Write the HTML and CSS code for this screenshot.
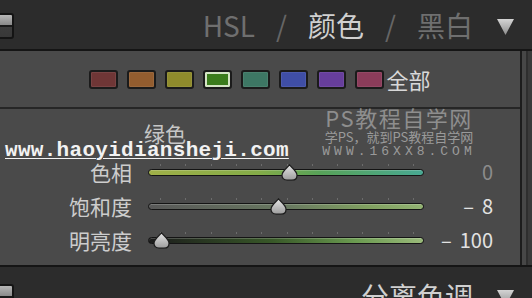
FILE: index.html
```html
<!DOCTYPE html>
<html lang="zh-CN">
<head>
    <meta charset="UTF-8">
    <meta name="viewport" content="width=device-width, initial-scale=1.0">
    <title>HSL / 颜色 / 黑白</title>
    <link rel="stylesheet" href="styles.css">
</head>
<body>
    <!-- Panel header -->
    <div class="bar">
        <span class="switch"></span>
        <div class="tabs">
            <span class="tab dim">HSL</span>
            <span class="sep">/</span>
            <span class="tab on">颜色</span>
            <span class="sep">/</span>
            <span class="tab dim">黑白</span>
        </div>
        <svg class="caret" width="17" height="16" viewBox="0 0 17 16">
            <defs>
                <linearGradient id="cg" x1="0" y1="0" x2="0" y2="1">
                    <stop offset="0" stop-color="#d4d4d4"/>
                    <stop offset="1" stop-color="#8e8e8e"/>
                </linearGradient>
            </defs>
            <polygon points="0,0 17,0 8.5,16" fill="url(#cg)"/>
        </svg>
    </div>

    <div class="main">
        <div class="panel">
            <div class="swatches">
                <span class="swatch" style="background-color:#6f3636"></span>
                <span class="swatch" style="background-color:#935d2f"></span>
                <span class="swatch" style="background-color:#8f8b2c"></span>
                <span class="swatch selected" style="background-color:#3b7c1c"></span>
                <span class="swatch" style="background-color:#3d7764"></span>
                <span class="swatch" style="background-color:#3f4ea6"></span>
                <span class="swatch" style="background-color:#673e9c"></span>
                <span class="swatch" style="background-color:#8b3c5a"></span>
                <span class="all">全部</span>
            </div>

            <div class="group">
                <div class="group-title">绿色</div>

                <div class="slider">
                    <span class="label">色相</span>
                    <div class="track hue">
                        <svg class="knob" style="left:131.5px" width="17" height="17" viewBox="0 0 17 17"><use href="#knob"/></svg>
                    </div>
                    <span class="value zero">0</span>
                </div>

                <div class="slider">
                    <span class="label">饱和度</span>
                    <div class="track sat">
                        <svg class="knob" style="left:121.3px" width="17" height="17" viewBox="0 0 17 17"><use href="#knob"/></svg>
                    </div>
                    <span class="value"><span class="neg">–</span>8</span>
                </div>

                <div class="slider">
                    <span class="label">明亮度</span>
                    <div class="track lum">
                        <svg class="knob" style="left:3.5px" width="17" height="17" viewBox="0 0 17 17"><use href="#knob"/></svg>
                    </div>
                    <span class="value"><span class="neg">–</span>100</span>
                </div>
            </div>
        </div>
        <div class="scroll"></div>
    </div>

    <div class="bar bottom">
        <span class="switch"></span>
        <div class="tabs">
            <span class="tab on">分离色调</span>
        </div>
        <svg class="caret" width="17" height="16" viewBox="0 0 17 16">
            <polygon points="0,0 17,0 8.5,16" fill="url(#cg)"/>
        </svg>
    </div>

    <!-- watermarks over the screenshot -->
    <div class="mark-url">www.haoyidiansheji.com</div>
    <div class="mark-ps">
        <div class="ps-name">PS教程自学网</div>
        <div class="ps-slogan">学PS，就到PS教程自学网</div>
        <div class="ps-site">WWW.16XX8.COM</div>
    </div>

    <svg width="0" height="0" class="defs">
        <defs>
            <linearGradient id="kg" x1="0" y1="0" x2="0" y2="1">
                <stop offset="0" stop-color="#e6e6e6"/>
                <stop offset="1" stop-color="#9c9c9c"/>
            </linearGradient>
            <symbol id="knob" viewBox="0 0 17 17">
                <path d="M8.5 0.8 C10.5 3.5 16 7 16 11.2 C16 14.4 13.8 16.2 11 16.2 L6 16.2 C3.2 16.2 1 14.4 1 11.2 C1 7 6.5 3.5 8.5 0.8 Z" fill="url(#kg)" stroke="#1c1c1c" stroke-width="1.2"/>
            </symbol>
        </defs>
    </svg>
</body>
</html>
```

FILE: styles.css
```css
body {
    margin: 0;
    width: 532px;
    height: 298px;
    overflow: hidden;
    position: relative;
    background-color: #2c2c2c;
    font-family: "Noto Sans CJK SC", "Noto Sans", sans-serif;
}
.defs {
    position: absolute;
}
.bar {
    height: 49px;
    display: flex;
    align-items: center;
    background-color: #2c2c2c;
    border-bottom: 2px solid #151515;
}
.bar.bottom {
    margin-top: 4px;
    border-bottom: none;
}
.switch {
    width: 22px;
    height: 26px;
    margin-left: -8px;
    margin-top: 2px;
    box-sizing: border-box;
    border: 2px solid #141414;
    border-radius: 3px;
    background: linear-gradient(to bottom, #b6b6b6 0, #8a8a8a 45%, #1a1a1a 45%, #1a1a1a 55%, #3c3c3c 55%, #383838 100%);
}
.tabs {
    margin-left: auto;
    display: flex;
    align-items: center;
    gap: 21px;
    font-size: 28px;
    line-height: 1;
}
.tab.dim {
    color: #6f6f6f;
}
.tab.on {
    color: #d0d0d0;
}
.sep {
    color: #666;
}
.caret {
    margin-left: 24px;
    margin-right: 18px;
    margin-top: 4px;
}

.main {
    height: 214px;
    display: flex;
    background-color: #4a4a4a;
    border-bottom: 2px solid #151515;
}
.panel {
    flex: 1;
    border-right: 2px solid #1c1c1c;
}
.scroll {
    width: 10px;
    background: linear-gradient(to right, #474747 0, #474747 4px, #2e2e2e 4px, #2e2e2e 6px, #3a3a3a 6px);
}

.swatches {
    height: 56px;
    display: flex;
    align-items: center;
    justify-content: center;
    gap: 9px;
    border-bottom: 2px solid #262626;
}
.swatch {
    width: 29px;
    height: 19px;
    box-sizing: border-box;
    border: 2px solid #1b1b1b;
    border-radius: 3px;
    box-shadow: inset 0 0 0 1px rgba(255,255,255,0.07);
}
.swatch.selected {
    box-shadow: inset 0 0 0 2px #d4e4c4;
}
.all {
    margin-left: -7px;
    font-size: 22px;
    line-height: 1;
    color: #d8d8d8;
}

.group {
    padding-top: 12px;
}
.group-title {
    margin-left: 144px;
    margin-bottom: 10px;
    font-size: 21px;
    line-height: 24px;
    color: #c6c6c6;
}
.slider {
    height: 34px;
    display: grid;
    grid-template-columns: 132px 276px 53px;
    column-gap: 16px;
    align-items: center;
}
.label {
    text-align: right;
    font-size: 21px;
    line-height: 1;
    color: #cdcdcd;
}
.track {
    position: relative;
    height: 7px;
    box-sizing: border-box;
    border: 1px solid #141414;
    border-radius: 4px;
    box-shadow: inset 0 1px 0 rgba(255,255,255,0.2);
}
.track::before {
    content: "";
    position: absolute;
    left: 11px;
    top: -6px;
    width: 254px;
    height: 2px;
    background: repeating-linear-gradient(to right, #6c6c6c 0, #6c6c6c 1px, transparent 1px, transparent 25.3px);
}
.track.hue {
    background: linear-gradient(to right, #a0b048 0%, #84ac48 40%, #58a258 62%, #48a892 100%);
}
.track.sat {
    background: linear-gradient(to right, #585858 0%, #687860 50%, #80a060 80%, #92b272 100%);
}
.track.lum {
    background: linear-gradient(to right, #1c1c1c 0%, #385828 45%, #6a9a50 75%, #9aba7a 100%);
}
.knob {
    position: absolute;
    top: -6px;
}
.value {
    text-align: right;
    font-size: 20px;
    line-height: 1;
    color: #e2e2e2;
}
.value.zero {
    color: #8c8c8c;
}
.neg {
    margin-right: 8px;
}

.mark-url {
    position: absolute;
    left: 5px;
    top: 140px;
    font-family: "Liberation Mono", monospace;
    font-weight: bold;
    font-size: 21px;
    line-height: 21px;
    letter-spacing: 0.3px;
    color: #f2f2f2;
    text-decoration: underline;
    text-decoration-thickness: 1px;
    text-underline-offset: 2px;
}
.mark-ps {
    position: absolute;
    left: 309px;
    top: 106px;
    width: 180px;
    text-align: center;
    color: #8e8e8e;
}
.ps-name {
    font-size: 22px;
    line-height: 22px;
    letter-spacing: 1.5px;
}
.ps-slogan {
    margin-top: 1px;
    font-size: 13px;
    line-height: 15px;
    color: #9a9a9a;
}
.ps-site {
    font-family: "Liberation Mono", monospace;
    font-size: 13px;
    line-height: 15px;
    letter-spacing: 4px;
    color: #9a9a9a;
}
```
